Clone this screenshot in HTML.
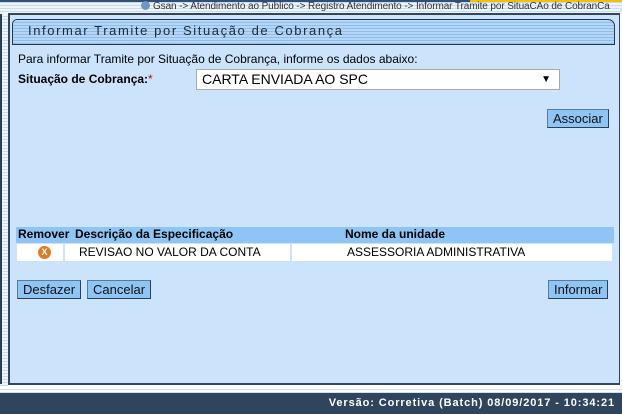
<!DOCTYPE html>
<html><head><style>
*{margin:0;padding:0;box-sizing:border-box}
body{width:622px;height:414px;position:relative;overflow:hidden;background:#fff;font-family:"Liberation Sans",Arial,sans-serif;font-size:12px;color:#000}
.stripes{background:repeating-linear-gradient(#eef4fb 0 2px,#c9dcee 2px 3px)}
.abs{position:absolute}
.btn{position:absolute;height:19px;background:#8ec5f5;border:1px solid #5a7a9a;border-right-color:#2a3f55;border-bottom-color:#2a3f55;font-size:13px;line-height:17px;padding:0 5px;color:#111}
</style></head><body>
<div class="abs stripes" style="left:0;top:0;width:622px;height:14px"></div>
<div class="abs" style="left:0;top:0;width:622px;height:2px;background:#2f4f7a"></div>
<div class="abs" style="left:470px;top:0;width:152px;height:2px;background:#f2c200"></div>
<div class="abs" style="left:141px;top:1px;font-size:10px;color:#333;white-space:nowrap;line-height:11px;letter-spacing:-0.1px"><span style="display:inline-block;width:9px;height:9px;border-radius:50%;background:#6d95c6;vertical-align:-1px;margin-right:3px"></span>Gsan -&gt; Atendimento ao Publico -&gt; Registro Atendimento -&gt; Informar Tramite por SituaCAo de CobranCa</div>
<div class="abs stripes" style="left:0;top:14px;width:8px;height:372px"></div>
<div class="abs" style="left:0;top:14px;width:2px;height:370px;background:#2a3f55"></div>
<div class="abs" style="left:8px;top:13px;width:612px;height:372px;background:#cbe3fb;border:2px solid #33465a;border-right-width:1px"></div>
<div class="abs" style="left:12px;top:19px;width:603px;height:26px;border:1px solid #23384e;border-radius:5px 7px 0 0;background:repeating-linear-gradient(#b5d7f7 0 2px,#8fbde8 2px 3px)"></div>
<div class="abs" style="left:28px;top:23px;font-size:13px;letter-spacing:1.6px;color:#1a2a3a">Informar Tramite por Situação de Cobrança</div>
<div class="abs" style="left:18px;top:52px;font-size:12px">Para informar Tramite por Situação de Cobrança, informe os dados abaixo:</div>
<div class="abs" style="left:18px;top:72px;font-weight:bold;font-size:12px">Situação de Cobrança:<span style="color:#c00;font-weight:normal">*</span></div>
<div class="abs" style="left:196px;top:69px;width:364px;height:21px;background:#fff;border:1px solid #aaa;font-size:14px;line-height:19px;padding-left:5px">CARTA ENVIADA AO SPC<span style="position:absolute;right:8px;top:0;font-size:10px">▼</span></div>
<div class="btn" style="left:547px;top:109px">Associar</div>
<div class="abs" style="left:16px;top:227px;width:598px;height:16px;background:#8ec5f5"></div>
<div class="abs" style="left:18px;top:227px;font-weight:bold;line-height:15px">Remover</div>
<div class="abs" style="left:75px;top:227px;font-weight:bold;line-height:15px">Descrição da Especificação</div>
<div class="abs" style="left:345px;top:227px;font-weight:bold;line-height:15px">Nome da unidade</div>
<div class="abs" style="left:16px;top:243px;width:598px;height:20px;background:#cbe3fb"></div>
<div class="abs" style="left:17px;top:244px;width:46px;height:17px;background:#fff"></div>
<div class="abs" style="left:65px;top:244px;width:225px;height:17px;background:#fff"></div>
<div class="abs" style="left:292px;top:244px;width:320px;height:17px;background:#fff"></div>
<div class="abs" style="left:38px;top:246px;width:13px;height:13px;border-radius:50%;background:#e07b22;color:#fff;font-size:9px;font-weight:bold;text-align:center;line-height:13px">X</div>
<div class="abs" style="left:79px;top:245px;font-size:12px;line-height:15px">REVISAO NO VALOR DA CONTA</div>
<div class="abs" style="left:347px;top:245px;font-size:12px;line-height:15px">ASSESSORIA ADMINISTRATIVA</div>
<div class="btn" style="left:17px;top:280px">Desfazer</div>
<div class="btn" style="left:87px;top:280px">Cancelar</div>
<div class="btn" style="left:548px;top:280px">Informar</div>
<div class="abs" style="left:0;top:387px;width:622px;height:6px;background:repeating-linear-gradient(#fff 0 2px,#cfe0f0 2px 3px)"></div>
<div class="abs" style="left:0;top:393px;width:622px;height:21px;background:#2e455d"></div>
<div class="abs" style="right:7px;top:396px;color:#fff;font-weight:bold;font-size:11px;letter-spacing:0.9px;line-height:14px">Versão: Corretiva (Batch) 08/09/2017 - 10:34:21</div>
</body></html>
